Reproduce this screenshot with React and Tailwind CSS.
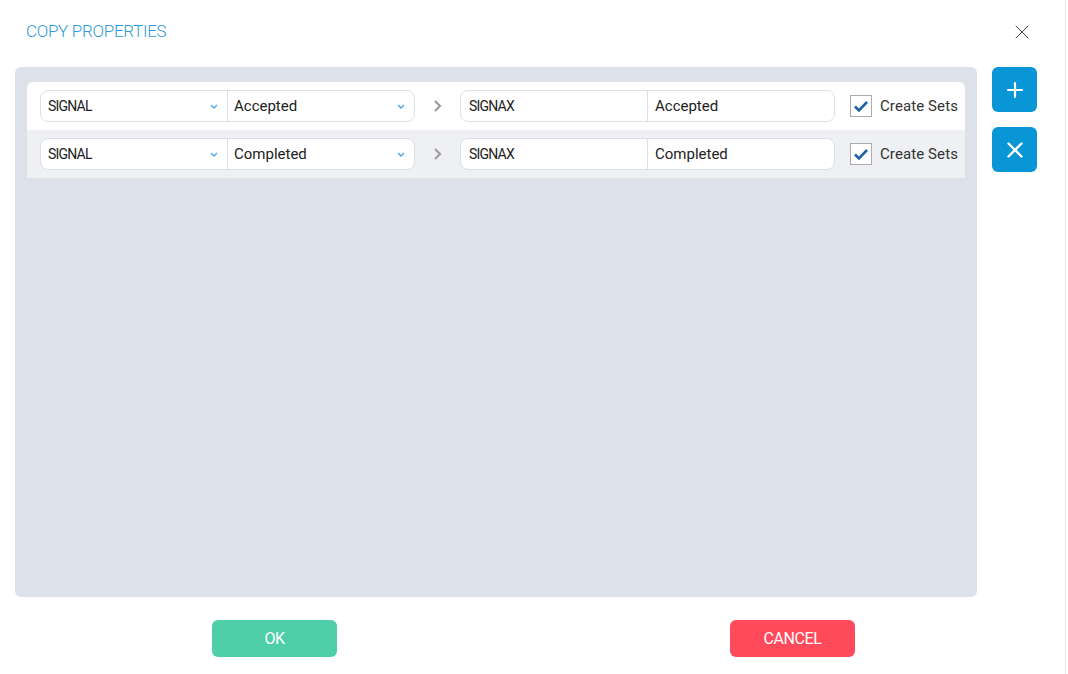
import { Plus, X } from 'lucide-react';

const font = { fontFamily: "Roboto, 'Liberation Sans', sans-serif" };

const rows = [
  { from: 'SIGNAL', prop: 'Accepted', to: 'SIGNAX', toProp: 'Accepted' },
  { from: 'SIGNAL', prop: 'Completed', to: 'SIGNAX', toProp: 'Completed' },
];

function Chevron() {
  return (
    <svg width="8" height="5" viewBox="0 0 8 5" className="shrink-0">
      <path d="M1 1l3 3 3-3" fill="none" stroke="#4aa3e0" strokeWidth="1.3" />
    </svg>
  );
}

function Row({ row, alt }) {
  return (
    <div className={`flex items-center h-12 pl-[13px] ${alt ? 'bg-[#eef0f4]' : 'bg-white rounded-t-md'}`}>
      <div className="flex h-8 w-[375px] bg-white border border-[#dcdfe6] rounded-lg text-[#222]">
        <div className="flex items-center justify-between w-[187px] pl-[7px] pr-[9px] border-r border-[#dcdfe6]">
          <span className="text-[14px] tracking-[-0.8px]">{row.from}</span>
          <Chevron />
        </div>
        <div className="flex items-center justify-between flex-1 pl-[6px] pr-[9px]">
          <span className="text-[15px]">{row.prop}</span>
          <Chevron />
        </div>
      </div>
      <div className="w-[45px] flex justify-center">
        <svg width="10" height="14" viewBox="0 0 10 14">
          <path d="M2 2l5 5-5 5" fill="none" stroke="#a09d98" strokeWidth="2.2" />
        </svg>
      </div>
      <div className="flex h-8 w-[375px] bg-white border border-[#dcdfe6] rounded-lg text-[#222]">
        <div className="flex items-center w-[187px] pl-[8px] border-r border-[#dcdfe6]">
          <span className="text-[14px] tracking-[-0.8px]">{row.to}</span>
        </div>
        <div className="flex items-center flex-1 pl-[7px]">
          <span className="text-[15px]">{row.toProp}</span>
        </div>
      </div>
      <div className="ml-[15px] w-[22px] h-[22px] border border-[#a9abb0] bg-white flex items-center justify-center">
        <svg width="16" height="13" viewBox="0 0 16 13">
          <path d="M2 6.5l4 4L14 2" fill="none" stroke="#1b62a8" strokeWidth="2.6" />
        </svg>
      </div>
      <span className="ml-2 text-[15px] text-[#333] tracking-[0.1px]">Create Sets</span>
    </div>
  );
}

export default function App() {
  return (
    <div className="w-[1068px] h-[674px] bg-white relative" style={font}>
      <div className="w-[1066px] h-full border-r border-[#e8e9ec] flex flex-col">
        <div className="flex items-center justify-between h-[63px] pl-[26px] pr-[31px]">
          <h1 className="text-[17px] font-light text-[#2e9bd8] tracking-[-0.3px]">COPY PROPERTIES</h1>
          <X size={24} strokeWidth={0.9} className="text-[#2a2f36]" />
        </div>
        <div className="flex pl-[15px] pt-[4px]">
          <div className="w-[962px] h-[530px] bg-[#dde1ea] rounded-md pt-[15px] px-[12px]">
            {rows.map((r, i) => (
              <Row key={i} row={r} alt={i % 2 === 1} />
            ))}
          </div>
          <div className="ml-[15px] flex flex-col gap-[15px]">
            <button className="w-[45px] h-[45px] bg-[#0896d7] rounded-md flex items-center justify-center text-white">
              <Plus size={24} strokeWidth={2.2} />
            </button>
            <button className="w-[45px] h-[45px] bg-[#0896d7] rounded-md flex items-center justify-center text-white">
              <X size={26} strokeWidth={2.2} />
            </button>
          </div>
        </div>
        <div className="flex pt-[23px]">
          <button className="ml-[212px] w-[125px] h-[37px] rounded-md bg-[#4fcfa8] text-white text-[16px] tracking-[-0.4px]">OK</button>
          <button className="ml-[393px] w-[125px] h-[37px] rounded-md bg-[#ff4a5b] text-white text-[16px] tracking-[-0.4px]">CANCEL</button>
        </div>
      </div>
    </div>
  );
}
